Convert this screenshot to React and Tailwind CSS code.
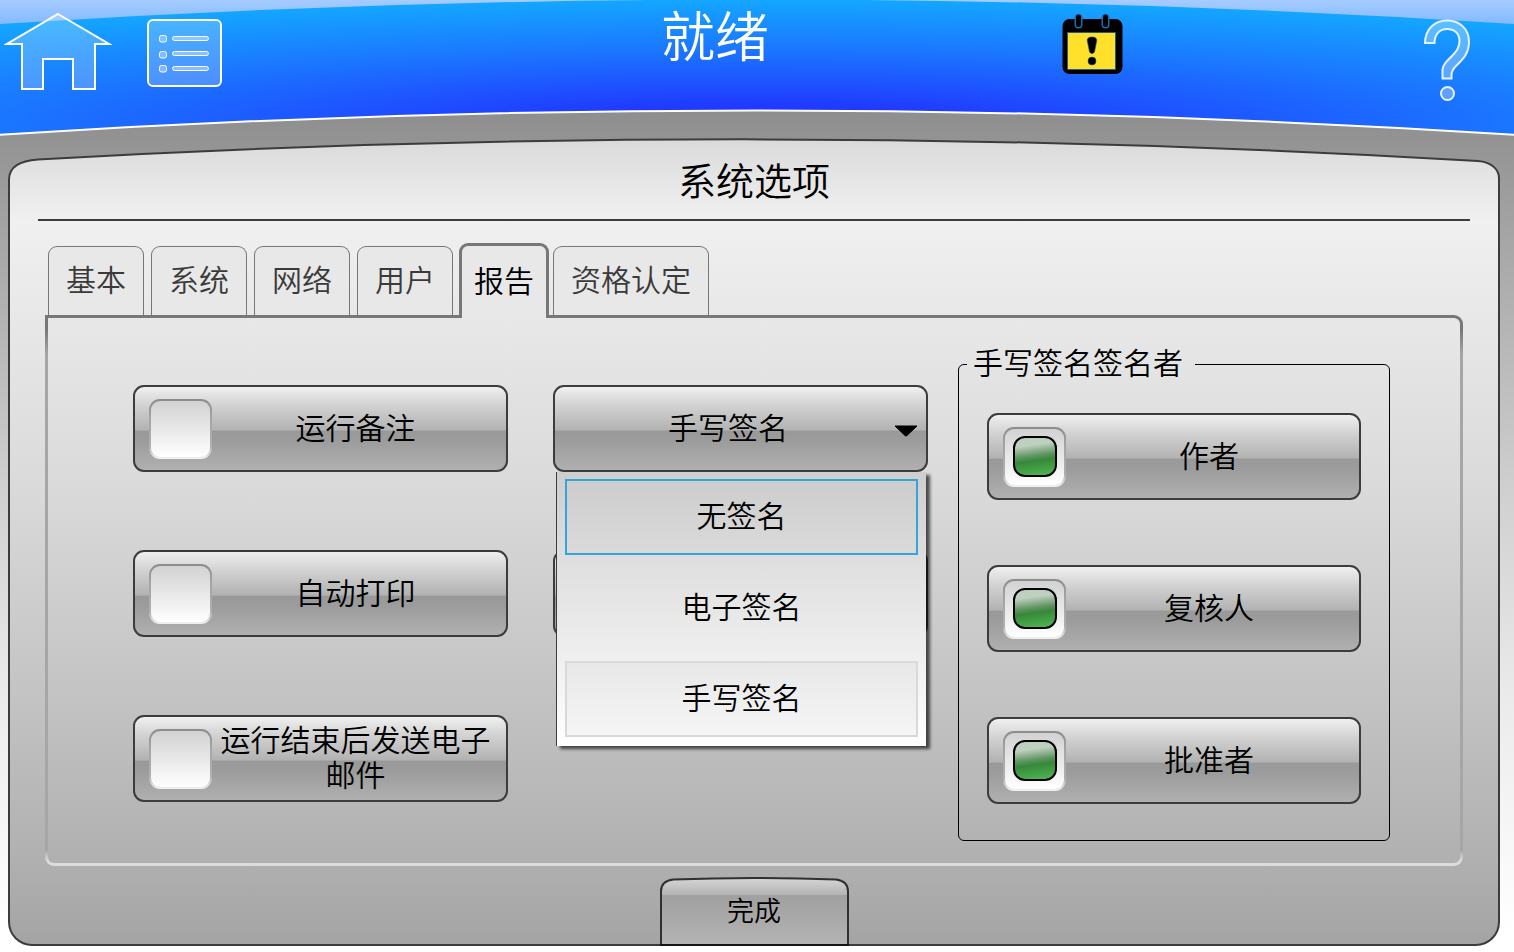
import React, { useState } from 'react';

const tabs = [
  { id: 'basic', name: '基本' },
  { id: 'system', name: '系统' },
  { id: 'network', name: '网络' },
  { id: 'user', name: '用户' },
  { id: 'report', name: '报告' },
  { id: 'qualification', name: '资格认定' }
];

const initialOptions = [
  { id: 'notes', name: '运行备注', checked: false },
  { id: 'autoPrint', name: '自动打印', checked: false },
  { id: 'sendMail', name: '运行结束后发送电子邮件', checked: false }
];

const initialSigners = [
  { id: 'author', name: '作者', checked: true },
  { id: 'reviewer', name: '复核人', checked: true },
  { id: 'approver', name: '批准者', checked: true }
];

const signatureTypes = ['无签名', '电子签名', '手写签名'];

const glossy =
  'rounded-[11px] border-2 border-[#3c3c3c] bg-[linear-gradient(#f0f0f0,#d2d2d2_22%,#b2b2b2_52%,#999999_53%,#9c9c9c_65%,#b0b0b0)]';

const HomeIcon = () => (
  <svg viewBox="0 0 108 80" className="w-[108px] h-20" aria-hidden="true">
    <path
      d="M54 2 L105 32 H91 V77 H69 V47 H39 V77 H18 V32 H3 Z"
      fill="#ffffff"
      fillOpacity="0.22"
      stroke="#ffffff"
      strokeWidth="2"
    />
  </svg>
);

const ListIcon = () => (
  <svg viewBox="0 0 75 68" className="w-[75px] h-[68px]" fill="#ffffff" stroke="#ffffff" aria-hidden="true">
    <rect x="1" y="1" width="73" height="66" rx="5" fillOpacity="0.22" strokeWidth="2" />
    {[16, 32, 46].map(y => (
      <rect key={y} x="12.5" y={y + 0.5} width="7" height="6.5" rx="2" fillOpacity="0.3" />
    ))}
    {[17.5, 32.5, 47.5].map(y => (
      <rect key={y} x="25.5" y={y} width="36" height="4" rx="2" fillOpacity="0.35" />
    ))}
  </svg>
);

const AlertIcon = () => (
  <svg viewBox="0 0 62 64" className="w-[62px] h-16" aria-hidden="true">
    <rect x="0.5" y="7" width="60" height="55" rx="7" fill="#000000" />
    <rect x="5.5" y="20.5" width="48" height="37" fill="#ffe02b" stroke="#2a5a80" />
    {[16.5, 43.5].map(x => (
      <g key={x} strokeLinecap="round">
        <path d={`M${x} 6 V12.5`} stroke="#1c6dad" strokeWidth="8" />
        <path d={`M${x} 5 V12.5`} stroke="#000000" strokeWidth="5" />
      </g>
    ))}
    <path d="M30 25 C34 25 35.5 27 34.5 30 L32.5 40 Q30 43.5 27.5 40 L25.5 30 C24.5 27 26 25 30 25 Z" fill="#000000" stroke="#2a5a80" strokeWidth="0.6" />
    <circle cx="30" cy="49" r="4" fill="#000000" stroke="#2a5a80" strokeWidth="0.6" />
  </svg>
);

const HelpIcon = () => (
  <svg viewBox="0 0 48 84" className="w-12 h-[84px]" fill="#ffffff" fillOpacity="0.3" stroke="#e6f2ff" strokeWidth="2" aria-hidden="true">
    <path d="M2 25 C2 11 12 2.5 24 2.5 C37 2.5 46 11 46 24 C46 36 39 42 33 48 C29.5 51.5 28.5 54 28.5 57 V60.5 H19.5 V52 C19.5 46 24 43 28 39 C33 34 36.5 30 36.5 23 C36.5 15 31 11 24 11 C17 11 11.5 16 11.5 25 Z" />
    <circle cx="24.5" cy="75.5" r="6.5" />
  </svg>
);

const HeaderArch = () => (
  <svg
    viewBox="0 0 1514 138"
    preserveAspectRatio="none"
    className="absolute inset-0 w-full h-full"
    aria-hidden="true"
  >
    <defs>
      <radialGradient id="sky" gradientUnits="userSpaceOnUse" cx="0" cy="0" r="1" gradientTransform="translate(757 125) scale(1260 125)">
        <stop offset="0" stopColor="#2030ff" />
        <stop offset="0.16" stopColor="#203aff" />
        <stop offset="0.6" stopColor="#1b76ff" />
        <stop offset="1" stopColor="#14a6ff" />
      </radialGradient>
      <linearGradient id="shine" x1="0" y1="0" x2="0" y2="1">
        <stop offset="0" stopColor="#a6ccff" />
        <stop offset="1" stopColor="#84baff" />
      </linearGradient>
    </defs>
    <path d="M-4 -4 H1518 V135 Q757 86 -4 135 Z" fill="url(#sky)" />
    <path d="M0 0 H1514 V24 Q757 -25 0 24 Z" fill="url(#shine)" />
    <path d="M-4 135 Q757 86 1518 135" fill="none" stroke="#ffffff" strokeWidth="2" />
  </svg>
);

const CheckOption = ({ option, onToggle }) => (
  <label className={`flex items-center h-[87px] pl-[14px] pr-[7px] cursor-pointer ${glossy}`}>
    <input
      type="checkbox"
      checked={option.checked}
      onChange={() => onToggle(option.id)}
      className="appearance-none shrink-0 grid place-items-center w-[63px] h-[60px] rounded-[11px] border-2 border-transparent [background:linear-gradient(#d2d2d2,#e8e8e8_50%,#ffffff)_padding-box,linear-gradient(#8c8c8c,#a4a4a4_30%,#b0b0b0_80%,#f4f4f4)_border-box] checked:before:content-[''] checked:before:w-11 checked:before:h-[41px] checked:before:rounded-[12px] checked:before:border-2 checked:before:border-black checked:before:bg-[linear-gradient(172deg,#bccfbd,#c0d0c0_22%,#5f9462_48%,#37883a_60%,#4fb852)]"
    />
    <span className="flex-1 pb-[5px] text-center">{option.name}</span>
  </label>
);

const App = () => {
  const [activeTab, setActiveTab] = useState('report');
  const [options, setOptions] = useState(initialOptions);
  const [signers, setSigners] = useState(initialSigners);
  const [signature, setSignature] = useState('手写签名');
  const [menuOpen, setMenuOpen] = useState(true);

  const toggle = (setList) => (id) => {
    setList(list => list.map(item => (item.id === id ? { ...item, checked: !item.checked } : item)));
  };

  const handleSelect = (type) => {
    setSignature(type);
    setMenuOpen(false);
  };

  return (
    <div className="min-h-screen flex flex-col pb-[6px] font-['Noto_Sans_CJK_SC',sans-serif] font-[350] text-[30px] leading-[35px] text-black bg-[linear-gradient(#8e8e8e_112px,#a6a6a6_240px,#cecece_480px,#ebebeb_700px,#ffffff_930px)]">
      <header className="relative h-[138px]">
        <HeaderArch />
        <div className="relative grid grid-cols-[655fr_120px_739fr] items-start">
          <nav className="flex gap-[35px] pl-1">
            <button type="button" aria-label="主页" className="mt-3"><HomeIcon /></button>
            <button type="button" aria-label="菜单" className="mt-[19px] h-[68px]"><ListIcon /></button>
          </nav>
          <p className="text-center text-[54px] leading-[68px] text-white whitespace-nowrap">就绪</p>
          <div className="flex justify-between pl-[287px] pr-[43px]">
            <button type="button" aria-label="提醒" className="mt-3 h-16"><AlertIcon /></button>
            <button type="button" aria-label="帮助" className="mt-[18px]"><HelpIcon /></button>
          </div>
        </div>
      </header>

      <main className="flex-1 flex flex-col ml-2 mr-[14px]">
        <svg viewBox="0 0 1492 48" preserveAspectRatio="none" className="block w-full h-12" aria-hidden="true">
          <defs>
            <linearGradient id="cap" x1="0" y1="0" x2="0" y2="1">
              <stop offset="0" stopColor="#dadada" />
              <stop offset="1" stopColor="#e8e8e8" />
            </linearGradient>
          </defs>
          <path
            d="M1 50 V42 C1 28 12 23 30 21.5 Q746 -19.5 1470 23 C1484 24 1491 32 1491 40 V50"
            fill="url(#cap)"
            stroke="#3c3c3c"
            strokeWidth="2"
          />
        </svg>
        <div className="flex-1 flex flex-col border-2 border-t-0 border-[#3c3c3c] rounded-b-[24px] bg-[linear-gradient(#e7e7e7,#f0f0f0_35px,#e8e8e8_130px,#dadada_300px,#c2c2c2_520px,#b0b0b0_675px,#a4a4a4)]">
          <h1 className="relative -mt-[29px] text-center text-[38px] leading-[44px]">系统选项</h1>
          <hr className="mt-[18px] mx-7 border-t-2 border-[#3c3c3c]" />

          <div role="tablist" className="flex items-end gap-[7px] mt-[22px] ml-[38px]">
            {tabs.map(tab => (
              <button
                key={tab.id}
                type="button"
                role="tab"
                aria-selected={tab.id === activeTab}
                onClick={() => setActiveTab(tab.id)}
                className={
                  tab.id === activeTab
                    ? 'relative z-10 h-[75px] -ml-px -mr-[3px] -mb-[3px] px-3 pb-[6px] border-[3px] border-b-0 border-[#777777] rounded-t-[9px] bg-[#e8e8e8]'
                    : 'h-[69px] px-[17px] pb-[5px] border border-b-0 border-[#777777] rounded-t-[9px] bg-[#e8e8e8] text-[#3a3a3a]'
                }
              >
                {tab.name}
              </button>
            ))}
          </div>

          <div
            role="tabpanel"
            className="grid grid-cols-[795fr_432fr] gap-[30px] mx-[35px] pt-7 pb-[22px] pl-[85px] pr-[70px] border-[3px] border-transparent rounded-[9px] rounded-tl-none [background:linear-gradient(#e8e8e8,#dadada_168px,#c2c2c2_388px,#b0b0b0)_padding-box,linear-gradient(#777777_14px,#a6a6a6_40px,#a6a6a6_535px,#dcdcdc_546px)_border-box]"
          >
            <div className="grid grid-cols-2 gap-x-[45px] mt-[39px]">
              <div className="flex flex-col gap-[78px]">
                {options.map(option => (
                  <CheckOption key={option.id} option={option} onToggle={toggle(setOptions)} />
                ))}
              </div>

              <div className="flex flex-col gap-[78px]">
                <div className="relative">
                  <select
                    aria-label="签名类型"
                    value={signature}
                    onChange={e => setSignature(e.target.value)}
                    onMouseDown={e => {
                      e.preventDefault();
                      setMenuOpen(!menuOpen);
                    }}
                    className={`appearance-none block w-full h-[87px] pr-[25px] pb-[5px] text-center cursor-pointer ${glossy}`}
                  >
                    {signatureTypes.map(type => (
                      <option key={type} value={type}>{type}</option>
                    ))}
                  </select>
                  <svg viewBox="0 0 24 12" className="absolute right-[10px] top-10 w-6 h-3 pointer-events-none" aria-hidden="true">
                    <path d="M1 1 H23 L13 10.5 Q12 11.5 11 10.5 Z" stroke="#000000" strokeLinejoin="round" />
                  </svg>
                  {menuOpen && (
                    <div
                      role="listbox"
                      aria-label="签名类型"
                      className="absolute z-20 top-full left-[3px] right-[2px] flex flex-col gap-[15px] px-2 pt-[7px] pb-[9px] border-l border-[#3c3c3c] bg-[linear-gradient(#cecece,#e0e0e0_35%,#f0f0f0_70%,#ffffff)] shadow-[4px_3px_3px_rgba(0,0,0,0.65)]"
                    >
                      {signatureTypes.map((type, i) => (
                        <button
                          key={type}
                          type="button"
                          role="option"
                          aria-selected={type === signature}
                          onClick={() => handleSelect(type)}
                          className={
                            i === 0
                              ? 'h-[76px] pb-[5px] border-2 border-[#36a3d9] bg-black/[0.01]'
                              : type === signature
                                ? 'h-[76px] pb-[5px] border-2 border-[#d9d9d9] bg-black/[0.03]'
                                : 'h-[76px] pb-[5px] border-2 border-transparent'
                          }
                        >
                          {type}
                        </button>
                      ))}
                    </div>
                  )}
                </div>
                <div className={`h-[87px] ${glossy}`} />
              </div>
            </div>

            <fieldset className="min-w-0 px-7 pt-[31px] pb-9 border border-black rounded-[6px]">
              <legend className="ml-[-20px] pl-[6px] pr-3 pb-[5px] leading-[31px]">手写签名签名者</legend>
              <div className="flex flex-col gap-[65px]">
                {signers.map(signer => (
                  <CheckOption key={signer.id} option={signer} onToggle={toggle(setSigners)} />
                ))}
              </div>
            </fieldset>
          </div>

          <button
            type="button"
            className="relative self-center mt-auto -mb-[2px] w-[189px] h-[69px] pb-[5px] text-[27px]"
          >
            <svg viewBox="0 0 189 67" preserveAspectRatio="none" className="absolute inset-0 w-full h-full" aria-hidden="true">
              <defs>
                <linearGradient id="done" x1="0" y1="0" x2="0" y2="1">
                  <stop offset="0" stopColor="#d6d6d6" />
                  <stop offset="0.25" stopColor="#b4b4b4" />
                  <stop offset="0.26" stopColor="#a0a0a0" />
                  <stop offset="1" stopColor="#b4b4b4" />
                </linearGradient>
              </defs>
              <path d="M1 66 V14 Q1 4 13 2.5 Q94 -0.5 176 2.5 Q188 4 188 14 V66 Z" fill="url(#done)" stroke="#303030" strokeWidth="2" />
              <path d="M0 66 H189" stroke="#151515" strokeWidth="2" />
            </svg>
            <span className="relative">完成</span>
          </button>
        </div>
      </main>
    </div>
  );
};

export default App;
